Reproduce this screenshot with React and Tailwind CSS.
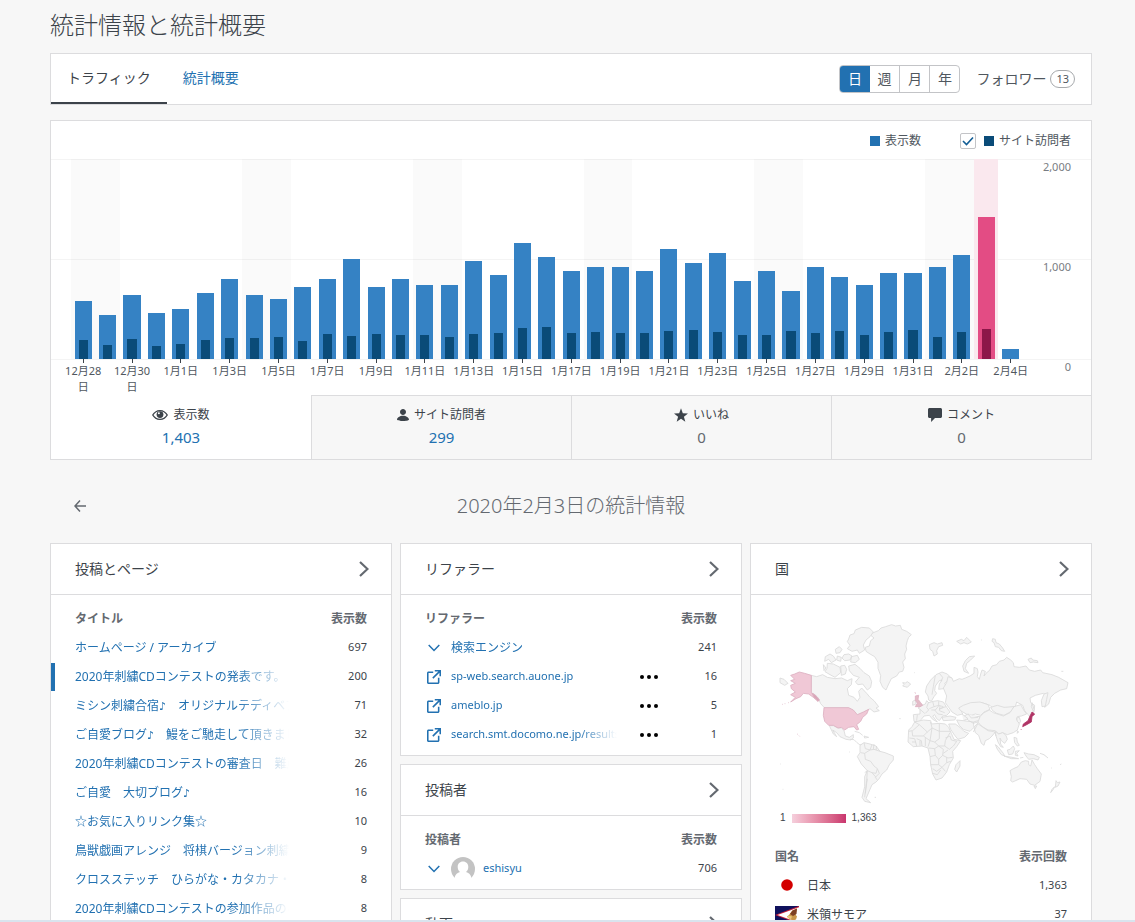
import React from 'react';
import clsx from 'clsx';

const DAYS = [
  ['12月28日', 580, 190], ['12月29日', 440, 140], ['12月30日', 640, 200], ['12月31日', 460, 130],
  ['1月1日', 500, 150], ['1月2日', 660, 190], ['1月3日', 800, 210], ['1月4日', 640, 210],
  ['1月5日', 600, 220], ['1月6日', 720, 180], ['1月7日', 800, 250], ['1月8日', 1000, 230],
  ['1月9日', 720, 250], ['1月10日', 800, 240], ['1月11日', 740, 240], ['1月12日', 740, 220],
  ['1月13日', 980, 250], ['1月14日', 840, 260], ['1月15日', 1160, 310], ['1月16日', 1020, 320],
  ['1月17日', 880, 260], ['1月18日', 920, 270], ['1月19日', 920, 260], ['1月20日', 880, 260],
  ['1月21日', 1100, 280], ['1月22日', 960, 290], ['1月23日', 1060, 270], ['1月24日', 780, 240],
  ['1月25日', 880, 240], ['1月26日', 680, 280], ['1月27日', 920, 260], ['1月28日', 820, 280],
  ['1月29日', 740, 240], ['1月30日', 860, 270], ['1月31日', 860, 290], ['2月1日', 920, 220],
  ['2月2日', 1040, 270], ['2月3日', 1420, 300], ['2月4日', 100, 0],
];
const SELECTED = 37;
const MAX = 2000;

const POSTS = [
  ['ホームページ / アーカイブ', 697],
  ['2020年刺繍CDコンテストの発表です。', 200],
  ['ミシン刺繍合宿♪　オリジナルテディベア', 71],
  ['ご自愛ブログ♪　鰻をご馳走して頂きまし', 32],
  ['2020年刺繍CDコンテストの審査日　難産', 26],
  ['ご自愛　大切ブログ♪', 16],
  ['☆お気に入りリンク集☆', 10],
  ['鳥獣戯画アレンジ　将棋バージョン刺繍', 9],
  ['クロスステッチ　ひらがな・カタカナ・', 8],
  ['2020年刺繍CDコンテストの参加作品のご', 8],
];

function EyeIcon() {
  return (
    <svg viewBox="0 0 16 12" className="h-3 w-4" fill="currentColor" aria-hidden="true">
      <path fillRule="evenodd" d="M8 1c3.6 0 6.2 2 8 5-1.800 3-4.400 5-8 5S1.800 9 0 6c1.800-3 4.400-5 8-5zm0 1.200C5.200 2.200 3 3.600 1.500 6 3 8.400 5.200 9.800 8 9.800S13 8.400 14.500 6C13 3.600 10.800 2.200 8 2.200z" />
      <circle cx="8" cy="5.600" r="3.400" />
      <circle cx="6.900" cy="4.300" r="1" fill="white" />
    </svg>
  );
}

function UserIcon() {
  return (
    <svg viewBox="4 4 16 16" className="size-3" fill="currentColor" aria-hidden="true">
      <path d="M12 4c2.210 0 4 1.790 4 4s-1.790 4-4 4-4-1.790-4-4 1.790-4 4-4zm0 16s8 0 8-2c0-2.400-3.900-5-8-5s-8 2.600-8 5c0 2 8 2 8 2z" />
    </svg>
  );
}

function StarIcon() {
  return (
    <svg viewBox="2 2 20 19" className="size-3.5" fill="currentColor" aria-hidden="true">
      <path d="M12 2l2.582 6.953L22 9.257l-5.822 4.602L18.180 21 12 16.891 5.820 21l2.002-7.141L2 9.257l7.418-.304z" />
    </svg>
  );
}

function CommentIcon() {
  return (
    <svg viewBox="3 3 18 18" className="size-3.5" fill="currentColor" aria-hidden="true">
      <path d="M12 16l-5 5v-5H5c-1.100 0-2-.900-2-2V5c0-1.100.900-2 2-2h14c1.100 0 2 .900 2 2v9c0 1.100-.900 2-2 2h-7z" />
    </svg>
  );
}

function ExternalIcon() {
  return (
    <svg viewBox="3 3 18 18" className="size-3.5" fill="currentColor" aria-hidden="true">
      <path d="M19 13v6c0 1.105-.895 2-2 2H5c-1.105 0-2-.895-2-2V7c0-1.105.895-2 2-2h6v2H5v12h12v-6h2zM13 3v2h4.586l-7.793 7.793 1.414 1.414L19 6.414V11h2V3h-8z" />
    </svg>
  );
}

function ChevronDown() {
  return (
    <svg viewBox="0 0 12 8" className="h-2 w-3" fill="none" stroke="currentColor" strokeWidth="1.500" aria-hidden="true">
      <path d="M.700 1L6 6.500 11.300 1" />
    </svg>
  );
}

function ChevronRight() {
  return (
    <svg viewBox="0 0 10 16" className="h-4 w-2.5" fill="none" stroke="currentColor" strokeWidth="2.200" aria-hidden="true">
      <path d="M1 1l7.500 7L1 15" />
    </svg>
  );
}

function Avatar() {
  return (
    <svg viewBox="0 0 24 24" className="size-6" aria-hidden="true">
      <circle cx="12" cy="12" r="12" fill="#c3c3c3" />
      <path fill="#fff" d="M12 4.500c3.200 0 5.300 2.300 5.300 5.500 0 2.200-.900 4-2.300 5 2.600.700 4.500 2.500 5.300 5.200V24H3.700v-3.800c.800-2.700 2.700-4.500 5.300-5.200-1.400-1-2.300-2.800-2.300-5 0-3.200 2.100-5.500 5.300-5.500z" />
    </svg>
  );
}

function JapanFlag() {
  return (
    <svg viewBox="0 0 24 18" className="w-6" aria-hidden="true">
      <rect width="24" height="18" fill="#fff" />
      <circle cx="12" cy="8" r="5.800" fill="#d30000" />
    </svg>
  );
}

function SamoaFlag() {
  return (
    <svg viewBox="0 0 24 18" className="w-6" aria-hidden="true">
      <rect width="24" height="18" fill="#10115c" />
      <path d="M0 9L24 0v18z" fill="#c8203a" />
      <path d="M2.500 9L24 1.200v15.600z" fill="#fff" />
      <path d="M22 2.500l-5 2.200-3 4.300-2 1.500 2.500 2.500 3.500 1.500 3-1 1-3-1.500-2z" fill="#c9964a" />
      <path d="M22 2.500l-4.500 2-2.500 3.500 3 2 3.500-2z" fill="#7c3f22" />
      <path d="M13 9.500l4 1-1 2.500-3.500-1z" fill="#e8c87a" />
    </svg>
  );
}

function WorldMap() {
  return (
    <svg viewBox="15 0 876 594" className="block w-full overflow-visible" fill="#f4f4f4" stroke="#dadada" strokeWidth="2.500" strokeLinejoin="round" role="img" aria-label="国">
      {/* North America */}
      <path d="M305 70l20-8 8-8 14-4 18-6 12 4 14-2 4 12 15 6 14 10-8 8-4 10-4 16 2 10-6 14 2 14-8 10 4 16-4 12-10 2-8 12-16 8-8 16-8 18-10-8-8-18 2-17-8-22v-18l-10-17-14-8-12-8-2-12 12-4 4-16 10-8-12-10z" />
      <path d="M398 218l8 1 6-4 10 7-10 10-14-4 4-4z" />
      <path d="M232 95l4-8 4-12 12-4 4-11 19-8 23 2 12 12-10 14-12 10-8 15 4 15-16 10-6-10-16 4-14-8 8-10z" />
      <path d="M196 118l12-8 8 8-6 10-12 2zM166 140l14-8 10 6 8 12-14 8-8-10-12 6zM222 134l14-2 10 6-6 12-16 2-8-8zM244 140l18-4 6 12-12 10-14-2zM202 138l12 4-2 12-12-4z" />
      <path d="M172 160l18 2 20 10 2 16-17 14-15-8-15-9 6-10zM212 168l12-2 6 12-4 14-12 4zM160 164l8 10-6 8z" />
      <path d="M236 168l19-5 15 12 12 13 16 10 7 17-3 17-10 8-14-18-14 2-8-8 12-14-18-6-12-14z" />
      <path d="M124 196l16 4 18-6 14 8 23 4 20-2 17 8 14-6-2 18-12 12 4 20 16 6 10 12 8-12-4-18 9-10 15 16 10 12 12 10 14 18-8 4 10 8-16 4-12-10-10 6-14 8-14 6-12-12-14-10h-72l-12-13-8-18-12-12-10-2z" />
      <path d="M178 347h12l14 7h10l8 8 4 16 12 4 12-8v10l-8 6-14-2-18-8-10-12-12-8 12 20-10-8z" />
      <path d="M240 388l12 1 8 8 10 8 8-3M254 364l14 4 10 8M282 378l14 4-12 2z" fill="none" />
      {/* South America */}
      <path d="M270 406l12-8 18 4 18 6 12 16 15 4 25 10v12l-12 14-8 16-14 12-10 16-8 8-12 8-6 14-6 14-6 14 14 12-18-4-8-12 8-32v-30l8-18-18-20-12-22 8-12z" />
      <path d="M282 398l4 18 14 4 6-16M300 420l-16 10-12-2M300 420l12-2 18 6M284 430l2 18 16 6 10 14 10 8-4 14-12-2-14-6-8 6M292 482l-2 30-6 50M322 476l6 14-12 12 6 8M292 506l-6 44M306 488l12 14M312 402l-2 16M320 408l-2 12" fill="none" />
      <path d="M30 204l12 4 12 12-10 6-14-8zM314 562h4M238 426h2M30 462h2M38 538h2M388 326h4" />

      {/* Countries with views */}
      <g fill="#f0c8d6" stroke="#dcb0c0">
        <path d="M62 196l12-4 14-6 16 4 20 6v52l12 8 12 14-4 4-14-12-14-10-16-2-8 10-14 6-16 10 14-14-14-8 14-8-12-10-2-10 14-6-14-8 12-4z" />
        <path d="M162 293h74l14 7 12 14 18-8 16-8-6 14-12 10-6 12-12 10 6 14-6 2-8-10-16 2-12 8-10-8-10 2-14-8h-14l-12-12-4-18zM36 283h2M44 281h2M54 278h2M82 372l2 2M87 377l2 2" />
        <path d="M126 250l10 6 12 14-4 4-12-12z" fill="#d9a5b7" />
      </g>

      <g transform="translate(390 0)">
        {/* Arctic */}
        <path d="M88 104l14-6 10 4 14-4 2 8-12 4-6 12 2 10-10 6-4-14-8-6zM170 94l14-6 8 4 8-10 8 8 6 6-12 6-10-4-10 4zM278 86l8 2 2 10 10 4 10 12 6 10-10-2-8-10-10-2-4-12-6-4zM384 148l10-4 4 6 14 2 2 6-14-2-10 2z" />
        <path d="M224 138l-16 2-12 12-8 16 4 16 14 6-10-14 4-16 12-10zM484 184h6M244 90h2M42 188h2" />
        {/* Europe */}
        <path d="M76 246l4-18 12-18 16-16 18-8 16 6 12 12-10 8-10 8 6 12-10 4-14 2 2-16 8-12-8 2-12 16-2 14 6 8-8 10-8 14-8-4-2-12z" />
        <path d="M40 314l20-2v-14l-6-4 12-8 10-4 4-10 6 6 14-4 14-2 16 4 10 16 10 14-10 10-12 2-10 14-8-6-6-12-6 4 14 18-14-8-10-12-16 2-8 10-8 8-14-2z" />
        <path d="M106 196l-6 34-4 24M118 190l10 12-4 12M86 276l-6 16 6 8-10 10M98 274l4 16-14 6M102 290l14-4 14 4M116 274v14l-10 12h-12M120 288l-2 14 16 6M104 300l10 12 14 2M60 298l14 12M52 314l-2 18M130 292l-12 6M138 290l-20 6" fill="none" />
        <path d="M38 274l8-4 2 12-10 4z" />
        {/* Africa */}
        <path d="M26 360l10-10 8-14 26-6 22 2 2 10 24-2 18 2 10 10 8 18 8 18 20 4-12 18-12 14 2 20-12 20-8 22-14 18-18 6-10-18-6-28-2-24-6-26-18-6-26 2-16-14z" />
        <path d="M168 464l12-12v16l-10 18-6-8z" />
        <path d="M44 336l14 8-20 18-12 2M58 344l24 22-12 12H38l-2-16M82 366l14-12-4-18M96 354l22 10v-24M118 364h32M118 364v22l-14 10-14-4 6-38M70 378l20 14-6 18M28 384l16 2 6 22M50 386l14 6 2 16M104 396l12 12h18l2-16 14-24M116 408l-12 8-18-2M134 408l14 10 12-10 10-14-16-4-4-12-14 6M90 440l16-4 10 12 12-12 2-18-14-10M116 448v16H92M128 436l16 8 14-2M116 464l10 8 14-14v-16M126 472l-16 12-12-8M126 472l10 12M104 416l2 20M144 420l-14 10M98 490l14 4 10-14M36 396h12M140 458l12-4M60 392v14M76 384v24" fill="none" />
        {/* Russia and Asia */}
        <path d="M130 234l10-16 4-18 12 4 4 10 18-8 8 2 10-4 14-6 12-8v-18l10 4 2 10-2 14 6 8 4-16 4-12 10 4-4 14 10-12 6-4 8-14 14-4 8-10 14-4 8-8 12 8 8 8 2 12 16 2 20-4 10 12 16 4 18-4 6 8 28 6 20 8 28 16-4 18-18 4-18 10-12 12-6 20-12 10-4-18 8-20-8-4-24 6-16 8 2 14 12 8-2 20-12 14-8-8-8-10-6-16-18-10-4 14-30 4h-38l-8-8-24-8-28 2-22 8-14 10 6 14-16 4-16-10-10-14-10-14 4-20z" />
        <path d="M424 272l8-20 12-4-4 20-4 20-10 2zM396 278l6 20-2 6-6-14z" />
        <path d="M176 294l14-8 22-8 28-2 24 8 6 14-18 8-10 10-16-4-18 6-16-10-10-6z" />
        <path d="M272 292l20-6 20 6 30-2-8 14-22 12-22-6-12-8z" />
        <path d="M240 320l12-12 16-8 12 8 30 10 20-10 12-18 20-6 10 18 8 10-16 6-12 2-2 8 8 14-6 18-12 8-18 6-14-6-12 4-10-10-22-2-20-12-12-14z" />
        <path d="M222 352l10-12 14 10 18 12 22 4-10 12-8 8-12 6-4 14-8-6-8-24-10-8z" />
        <path d="M286 364l10 8 12-4 10 8 4 12-8 12-10-8-4-8 2 18 8 10-8-2-8-14-6-18z" />
        <path d="M146 342l20 0 14 10 12 12 14 6-12 12-20 6-10-12-12-18zM170 330l20 2 30 4 2 16-12 12-20-6-12-12zM126 322l24-4 18 4-4 8-34 2zM204 312l16 6 20 2-6 16-14 4-16-10-12-12z" />
        <path d="M350 324l8-2 4 12-4 6-6-6zM352 362l4 4-4 4zM186 312l18 14-14 6M220 336l14-4M204 312l10 12 20-2M234 340l-14 26M284 366l4 12" />
        {/* Oceania */}
        <path d="M286 404l8 6 16 20 4 8-10-4-12-16zM312 438l24 4 20 4-22 0zM322 420l8-2 10-10 4 8-6 16-12 2zM346 424l12-2-8 8 4 8-8-2zM342 382l8 2 2 12 6 10-6 2-8-10zM372 428l14 4 16 2 16 8-4 8-14-4-14 2-8-10zM420 430l12 4 12 10M360 444l10-2M454 474h2M480 464l4-2" />
        <path d="M330 482l10-6 14-6 10-14 12-4 10 2v10l6 4 4-18 8 14 8 12 12 16-4 22-16 12-14-4-10-14-20-2-22 10-6-4 2-12zM402 528h8l-4 8zM468 512l4 6 8-2-6 12-8 4zM464 530l-4 8-8 10 4-10z" />
        <path d="M46 258l10-2-2 12 8 10 6 8-8 4H46l6-10-6-10zM44 248l4 2" fill="#e3bcc8" stroke="#dcb0c0" />
        <path d="M396 306l8 6-8 8-2 16-14 8-12 6 2-8 14-10 6-14zM362 360l2-2" fill="#b03465" stroke="#b03465" />
      </g>
    </svg>
  );
}

function Panel({ title, children }) {
  return (
    <section className="border border-[#dcdcde] bg-white">
      <h2 className="border-b border-[#dcdcde] text-sm">
        <a href="#" className="flex h-[50px] items-center justify-between pr-[22px] pl-6">
          {title}
          <span className="text-[#646970]"><ChevronRight /></span>
        </a>
      </h2>
      {children}
    </section>
  );
}

function Heading({ name, value = '表示数', span = 1 }) {
  return (
    <thead>
      <tr className="h-[29px] text-[#646970]">
        <th scope="col" colSpan={span} className="pl-6 text-left font-semibold">{name}</th>
        <th scope="col" className="w-[78px] pr-6 text-right font-semibold">{value}</th>
      </tr>
    </thead>
  );
}

function Value({ children }) {
  return <td className="w-[78px] pr-6 text-right text-[11px]">{children}</td>;
}

// the CJK font draws the note full width, so it gets a narrower face
function PostTitle({ text }) {
  return text.split('♪').map((part, i) => (
    <React.Fragment key={i}>
      {i > 0 && <span className="font-['DejaVu_Sans',sans-serif] text-[11px] leading-none">♪</span>}
      {part}
    </React.Fragment>
  ));
}

function Chart() {
  return (
    <div className="grid">
      <div className="col-start-1 row-start-1 text-right text-[11px] leading-[14px] text-[#787c82]">
        <div className="h-[100px] border-t border-[#f4f4f4] pr-5">2,000</div>
        <div className="h-[100px] border-t border-[#f4f4f4] pr-5">1,000</div>
        <div className="h-9 border-t border-[#f4f4f4] pr-5">0</div>
      </div>
      <div className="col-start-1 row-start-1 flex pr-[68px] pl-5">
        {DAYS.map(([label, views, visitors], i) => (
          <div key={label} className="flex min-w-0 flex-1 flex-col items-center">
            <div
              className={clsx(
                'flex h-[200px] w-full items-end justify-center',
                i === SELECTED && 'bg-[#fae8ee]',
                i % 7 < 2 && 'bg-black/2'
              )}
            >
              <div
                className={clsx('flex w-[70%] items-end justify-center', i === SELECTED ? 'bg-[#e34c84]' : 'bg-[#3582c4]')}
                style={{ height: `${(views / MAX) * 100}%` }}
              >
                <div
                  className={clsx('w-[53%]', i === SELECTED ? 'bg-[#8c1749]' : 'bg-[#0a4b78]')}
                  style={{ height: `${(visitors / views) * 100}%` }}
                />
              </div>
            </div>
            {i % 2 === 0 && (
              <>
                <div className="h-1 w-px bg-[#3c434a]" />
                <div className="w-11 text-center text-[11px] leading-4 text-[#50575e]">{label}</div>
              </>
            )}
          </div>
        ))}
      </div>
    </div>
  );
}

function StatTab({ icon, label, value, active }) {
  return (
    <a
      href="#"
      className={clsx(
        'flex h-16 flex-col items-center border-[#dcdcde]',
        active ? 'pt-[10px]' : 'border-t border-l bg-[#f7f7f7] pt-[9px]'
      )}
    >
      <span className="flex h-5 items-center gap-[5px] text-xs text-[#3c434a]">{icon}{label}</span>
      <span className={clsx('text-[15px] leading-6', value === '0' ? 'text-[#646970]' : 'text-[#2271b1]')}>{value}</span>
    </a>
  );
}

export default function App() {
  return (
    <div className="h-screen overflow-hidden bg-[#f7f7f7] pr-[43px] pl-[50px] font-['Noto_Sans','Noto_Sans_CJK_JP',sans-serif] text-[#3c434a]">
      <h1 className="pt-[7px] text-2xl leading-9 font-light">統計情報と統計概要</h1>

      <nav className="mt-[10px] flex h-[52px] items-stretch justify-between border border-[#dcdcde] bg-white text-sm">
        <div className="flex">
          <a href="#" className="flex items-center border-b-2 border-[#3c434a] px-4">トラフィック</a>
          <a href="#" className="flex items-center border-b-2 border-transparent px-4 text-[#2271b1]">統計概要</a>
        </div>
        <div className="flex items-center gap-4 pr-4">
          <div className="flex h-7 overflow-hidden rounded border border-[#c3c4c7] text-[#50575e]">
            <button className="-m-px w-[31px] bg-[#2271b1] text-white">日</button>
            <button className="w-[30px]">週</button>
            <button className="w-[30px] border-l border-[#c3c4c7]">月</button>
            <button className="w-[30px] border-l border-[#c3c4c7]">年</button>
          </div>
          <a href="#" className="flex items-center gap-1 text-[#50575e]">
            フォロワー
            <span className="flex h-[18px] items-center rounded-full border border-[#a7aaad] px-[5px] text-[11px]">13</span>
          </a>
        </div>
      </nav>

      <section className="mt-[15px] border border-[#dcdcde] bg-white">
        <div className="flex h-[38px] items-center justify-end pt-0.5 pr-5 text-xs text-[#50575e]">
          <span className="mr-[39px] flex items-center gap-[5px]">
            <span className="size-2.5 bg-[#2271b1]" />
            表示数
          </span>
          <label className="flex items-center">
            <span className="mr-2 grid size-4">
              <input type="checkbox" defaultChecked className="col-start-1 row-start-1 size-4 appearance-none rounded-xs border border-[#c3c4c7] bg-white" />
              <svg viewBox="0 0 16 16" className="pointer-events-none col-start-1 row-start-1 size-4" fill="none" stroke="#135e96" strokeWidth="1.600" aria-hidden="true">
                <path d="M3 8l3.500 3.500L13 4.500" />
              </svg>
            </span>
            <span className="mr-[5px] size-2.5 bg-[#0a4b78]" />
            サイト訪問者
          </label>
        </div>
        <Chart />
        <div className="grid grid-cols-4">
          <StatTab icon={<EyeIcon />} label="表示数" value="1,403" active />
          <StatTab icon={<UserIcon />} label="サイト訪問者" value="299" />
          <StatTab icon={<StarIcon />} label="いいね" value="0" />
          <StatTab icon={<CommentIcon />} label="コメント" value="0" />
        </div>
      </section>

      <div className="grid h-[83px] grid-cols-[60px_1fr_60px] items-center pt-2 text-[#646970]">
        <button aria-label="前の日" className="justify-self-center">
          <svg viewBox="0 0 12 12" className="size-3" fill="none" stroke="currentColor" strokeWidth="1.500" aria-hidden="true">
            <path d="M6 .500L1 6l5 5.500M1 6h11" />
          </svg>
        </button>
        <h2 className="text-center text-xl font-light">2020年2月3日の統計情報</h2>
      </div>

      <div className="grid grid-cols-3 items-start gap-2 text-xs">
        <Panel title="投稿とページ">
          <table className="mt-[9px] w-full table-fixed">
            <Heading name="タイトル" />
            <tbody>
              {POSTS.map(([title, views], i) => (
                <tr key={title} className="h-[29px]">
                  <td>
                    <div className={clsx('flex h-7 items-center border-l-4 pr-6 pl-5', i === 1 ? 'border-[#2271b1]' : 'border-transparent')}>
                      <a href="#" className="block w-full overflow-hidden whitespace-nowrap text-[#2271b1] [mask-image:linear-gradient(to_right,black_calc(100%-52px),transparent)]">
                        <PostTitle text={title} />
                      </a>
                    </div>
                  </td>
                  <Value>{views}</Value>
                </tr>
              ))}
            </tbody>
          </table>
        </Panel>

        <div className="flex flex-col gap-2">
          <Panel title="リファラー">
            <table className="mt-[9px] mb-[6px] w-full table-fixed">
              <colgroup>
                <col />
                <col className="w-[46px]" />
                <col className="w-[78px]" />
              </colgroup>
              <Heading name="リファラー" span={2} />
              <tbody>
                {[
                  ['検索エンジン', 241],
                  ['sp-web.search.auone.jp', 16],
                  ['ameblo.jp', 5],
                  ['search.smt.docomo.ne.jp/results', 1],
                ].map(([name, views], i) => (
                  <tr key={name} className="h-[29px]">
                    <td className="pl-6">
                      <a href="#" className="flex items-center gap-2 text-[#2271b1]">
                        <span className="flex w-[18px] shrink-0 justify-center">{i === 0 ? <ChevronDown /> : <ExternalIcon />}</span>
                        <span
                          className={clsx(
                            'block w-full overflow-hidden whitespace-nowrap [mask-image:linear-gradient(to_right,black_calc(100%-40px),transparent)]',
                            i > 0 && 'text-[11px]'
                          )}
                        >
                          {name}
                        </span>
                      </a>
                    </td>
                    <td className="pl-[22px]">
                      {i > 0 && (
                        <button aria-label="メニュー" className="block">
                          <svg viewBox="0 0 20 4" className="h-1 w-5" aria-hidden="true">
                            <circle cx="3" cy="2" r="2" />
                            <circle cx="10" cy="2" r="2" />
                            <circle cx="17" cy="2" r="2" />
                          </svg>
                        </button>
                      )}
                    </td>
                    <Value>{views}</Value>
                  </tr>
                ))}
              </tbody>
            </table>
          </Panel>

          <Panel title="投稿者">
            <table className="mt-[9px] mb-[6px] w-full table-fixed">
              <Heading name="投稿者" />
              <tbody>
                <tr className="h-[29px]">
                  <td className="pl-6">
                    <a href="#" className="flex items-center gap-2 text-[11px] text-[#2271b1]">
                      <span className="flex w-[18px] justify-center"><ChevronDown /></span>
                      <Avatar />
                      eshisyu
                    </a>
                  </td>
                  <Value>706</Value>
                </tr>
              </tbody>
            </table>
          </Panel>

          <Panel title="動画" />
        </div>

        <Panel title="国">
          <div className="px-6 pt-[15px]">
            <WorldMap />
            <div className="flex items-center gap-[6px] pt-1 pl-[5px] font-['Liberation_Sans',sans-serif] text-[10px] leading-3">
              1
              <span className="h-[9px] w-[54px] bg-linear-to-r from-[#f5cfdc] to-[#c9356e]" />
              1,363
            </div>
          </div>
          <table className="mt-[18px] w-full table-fixed">
            <Heading name="国名" value="表示回数" />
            <tbody>
              <tr className="h-[29px]">
                <td className="pl-6"><span className="flex items-center gap-2"><JapanFlag />日本</span></td>
                <Value>1,363</Value>
              </tr>
              <tr className="h-[29px]">
                <td className="pl-6"><span className="flex items-center gap-2"><SamoaFlag />米領サモア</span></td>
                <Value>37</Value>
              </tr>
            </tbody>
          </table>
        </Panel>
      </div>

      <div className="fixed inset-x-0 bottom-0 h-0.5 bg-[#d9e4ee]" />
    </div>
  );
}
